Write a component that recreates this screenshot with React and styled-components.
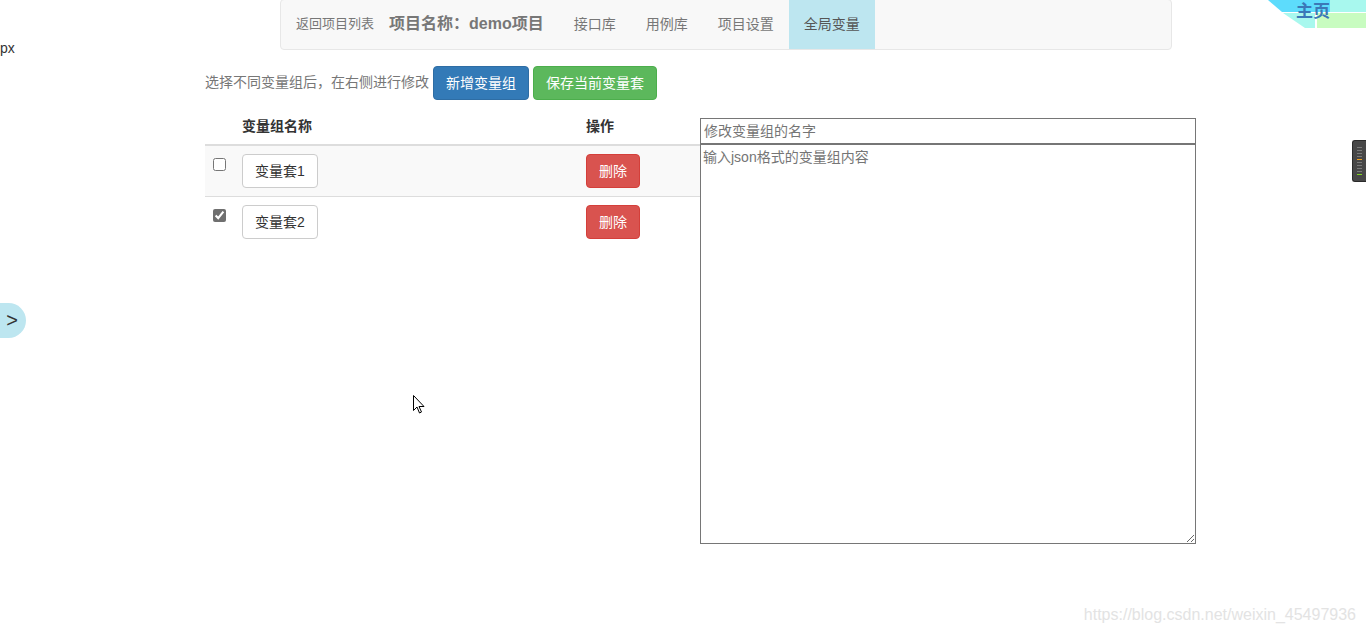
import { useState } from "react";
import styled, { createGlobalStyle } from "styled-components";

const GlobalStyle = createGlobalStyle`
  html, body {
    margin: 0;
    padding: 0;
    background: #fff;
  }
  body {
    font-family: "Liberation Sans", Arial, "Noto Sans CJK SC", sans-serif;
    font-size: 14px;
    line-height: 1.42857;
    color: #333;
  }
  * {
    box-sizing: border-box;
  }
`;

const Page = styled.div`
  position: relative;
  width: 1366px;
  height: 633px;
  overflow: hidden;
`;

const Navbar = styled.nav`
  display: flex;
  align-items: center;
  width: 892px;
  height: 51px;
  margin: -1px 0 0 280px;
  background: #f8f8f8;
  border: 1px solid #e7e7e7;
  border-radius: 4px;
`;

const BackLink = styled.a`
  padding-left: 15px;
  font-size: 13px;
  color: #777;
  text-decoration: none;
`;

const Brand = styled.span`
  padding: 0 15px;
  font-size: 16px;
  font-weight: bold;
  color: #777;
`;

const NavList = styled.ul`
  display: flex;
  align-self: stretch;
  list-style: none;
  margin: 0;
  padding: 0;
`;

const NavItem = styled.li`
  display: flex;
  align-items: center;
  padding: 0 15px;
  color: ${(p) => (p.$active ? "#555" : "#777")};
  background: ${(p) => (p.$active ? "#bde6f0" : "transparent")};
`;

const Main = styled.div`
  margin-left: 205px;
  width: 991px;
`;

const Toolbar = styled.div`
  display: flex;
  align-items: center;
  gap: 4px;
  margin-top: 16px;
  color: #777;
`;

const Btn = styled.button`
  display: inline-block;
  height: 34px;
  padding: 6px 12px;
  font-family: inherit;
  font-size: 14px;
  line-height: 20px;
  border-radius: 4px;
  border: 1px solid ${(p) => p.$border};
  background: ${(p) => p.$bg};
  color: ${(p) => p.$color || "#fff"};
  cursor: pointer;
`;

const Columns = styled.div`
  display: flex;
  align-items: flex-start;
  margin-top: 8px;
`;

const Table = styled.table`
  width: 495px;
  border-collapse: collapse;
  border-spacing: 0;
`;

const Th = styled.th`
  padding: 8px;
  text-align: left;
  font-weight: bold;
  line-height: 20px;
  border-bottom: 2px solid #ddd;
  width: ${(p) => p.$w || "auto"};
`;

const Tr = styled.tr`
  background: ${(p) => (p.$striped ? "#f9f9f9" : "transparent")};
`;

const Td = styled.td`
  padding: 8px;
  vertical-align: top;
  border-top: 1px solid #ddd;
  line-height: 20px;
`;

const Check = styled.input`
  width: 13px;
  height: 13px;
  margin: 4px 0 0;
  accent-color: #6f6f6f;
`;

const Editor = styled.div`
  display: flex;
  flex-direction: column;
  width: 496px;
  margin-top: 10px;
`;

const NameInput = styled.input`
  height: 26px;
  padding: 2px 3px;
  font-family: inherit;
  font-size: 14px;
  color: #333;
  border: 1px solid #767676;
  outline: none;
  &::placeholder {
    color: #757575;
  }
`;

const JsonArea = styled.textarea`
  height: 400px;
  padding: 2px;
  font-family: inherit;
  font-size: 14px;
  line-height: 20px;
  color: #333;
  border: 1px solid #767676;
  outline: none;
  &::placeholder {
    color: #757575;
  }
`;

const Stray = styled.span`
  position: absolute;
  left: 0;
  top: 39px;
  font-size: 14px;
  color: #333;
`;

const SideTab = styled.div`
  position: absolute;
  left: 0;
  top: 303px;
  width: 26px;
  height: 35px;
  display: flex;
  align-items: center;
  justify-content: center;
  padding-right: 2px;
  background: #bde6f0;
  border-radius: 0 18px 18px 0;
  font-size: 20px;
  color: #333;
`;

const Handle = styled.div`
  position: absolute;
  right: 0;
  top: 140px;
  width: 14px;
  height: 42px;
  display: flex;
  flex-direction: column;
  align-items: center;
  justify-content: center;
  gap: 2px;
  background: #474747;
  border: 1px solid #2a2a2a;
  border-right: none;
  border-radius: 3px 0 0 3px;
`;

const Tick = styled.i`
  display: block;
  width: 5px;
  height: 1px;
  background: ${(p) => p.$c || "#7a7a7a"};
`;

const HomeBadge = styled.div`
  position: absolute;
  right: 0;
  top: 0;
  width: 100px;
  height: 29px;
`;

const HomeText = styled.span`
  position: absolute;
  left: 30px;
  top: 0;
  font-family: "Noto Sans CJK SC", sans-serif;
  font-size: 17px;
  line-height: 20px;
  font-weight: bold;
  color: #3b78b8;
`;

const Watermark = styled.div`
  position: absolute;
  right: 10px;
  bottom: 6px;
  font-size: 16px;
  color: #e3e3e3;
`;

const Cursor = styled.svg`
  position: absolute;
  left: 413px;
  top: 395px;
`;

const groups = [
  { name: "变量套1", checked: false },
  { name: "变量套2", checked: true },
];

export default function App() {
  const [items, setItems] = useState(groups);

  const toggle = (i) =>
    setItems(items.map((g, j) => (j === i ? { ...g, checked: !g.checked } : g)));

  return (
    <Page>
      <GlobalStyle />
      <Navbar>
        <BackLink href="#">返回项目列表</BackLink>
        <Brand>项目名称：demo项目</Brand>
        <NavList>
          <NavItem>接口库</NavItem>
          <NavItem>用例库</NavItem>
          <NavItem>项目设置</NavItem>
          <NavItem $active>全局变量</NavItem>
        </NavList>
      </Navbar>

      <Main>
        <Toolbar>
          <span>选择不同变量组后，在右侧进行修改</span>
          <Btn $bg="#337ab7" $border="#2e6da4">新增变量组</Btn>
          <Btn $bg="#5cb85c" $border="#4cae4c">保存当前变量套</Btn>
        </Toolbar>

        <Columns>
          <Table>
            <thead>
              <tr>
                <Th $w="29px"></Th>
                <Th $w="344px">变量组名称</Th>
                <Th>操作</Th>
              </tr>
            </thead>
            <tbody>
              {items.map((g, i) => (
                <Tr key={g.name} $striped={i % 2 === 0}>
                  <Td>
                    <Check
                      type="checkbox"
                      checked={g.checked}
                      onChange={() => toggle(i)}
                    />
                  </Td>
                  <Td>
                    <Btn $bg="#fff" $border="#ccc" $color="#333">
                      {g.name}
                    </Btn>
                  </Td>
                  <Td>
                    <Btn $bg="#d9534f" $border="#d43f3a">删除</Btn>
                  </Td>
                </Tr>
              ))}
            </tbody>
          </Table>

          <Editor>
            <NameInput placeholder="修改变量组的名字" />
            <JsonArea placeholder="输入json格式的变量组内容" />
          </Editor>
        </Columns>
      </Main>

      <Stray>px</Stray>
      <SideTab>&gt;</SideTab>

      <Handle>
        <Tick />
        <Tick />
        <Tick />
        <Tick />
        <Tick $c="#f0a020" />
        <Tick />
        <Tick />
        <Tick />
        <Tick />
        <Tick $c="#7ed321" />
      </Handle>

      <HomeBadge>
        <svg width="100" height="29" viewBox="0 0 100 29">
          <polygon points="2,0 100,0 100,12 16,12" fill="#5ddcfc" />
          <polygon points="64,0 100,0 100,12 64,12" fill="#a8f8ee" />
          <polygon points="17,13 49,13 49,28 39,28" fill="#a8f8ee" />
          <rect x="51" y="13" width="49" height="15" fill="#c8fcc0" />
        </svg>
        <HomeText>主页</HomeText>
      </HomeBadge>

      <Cursor width="12" height="19" viewBox="0 0 12 19">
        <path
          d="M0.5 0.5 L0.5 15.5 L4 12 L6.5 18 L8.5 17 L6 11.5 L11 11.5 Z"
          fill="#fff"
          stroke="#000"
          strokeWidth="1"
        />
      </Cursor>

      <Watermark>https://blog.csdn.net/weixin_45497936</Watermark>
    </Page>
  );
}
